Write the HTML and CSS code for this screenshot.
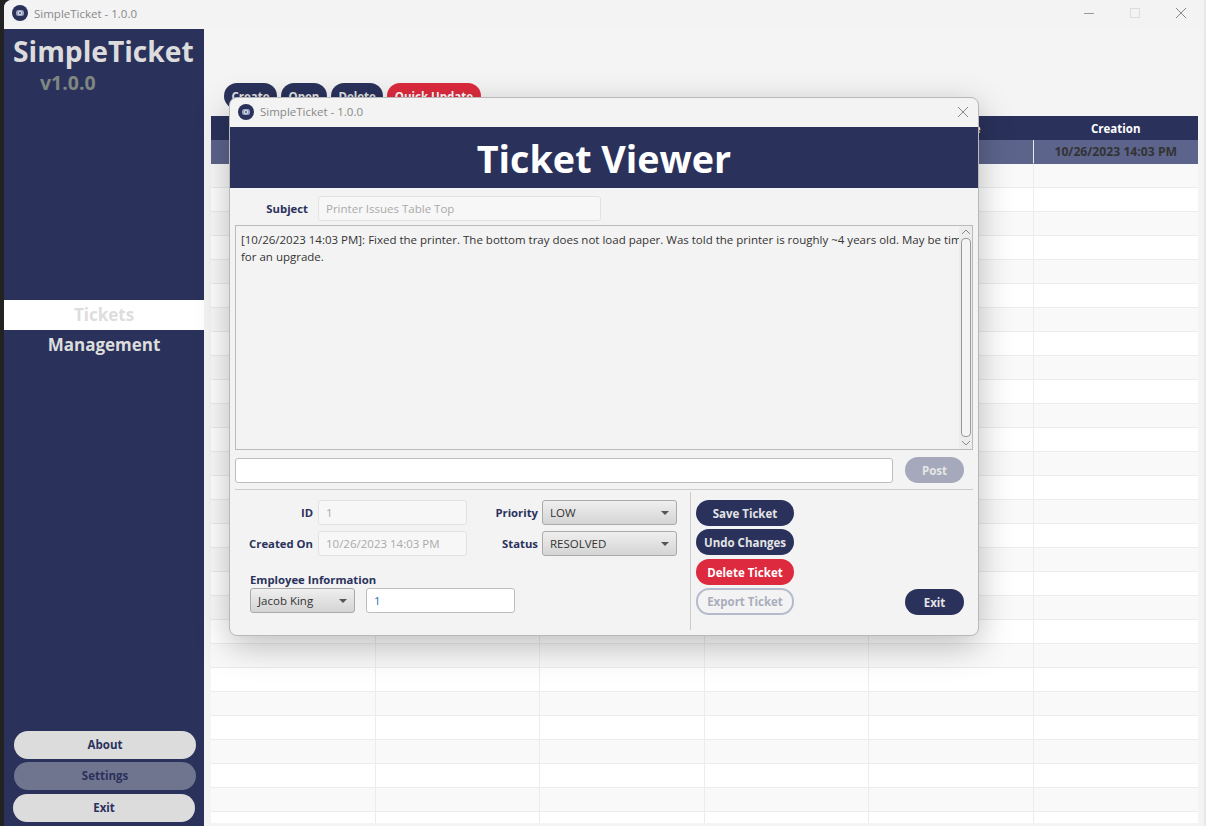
FILE: index.html
```html
<!DOCTYPE html>
<html lang="en">
<head>
    <meta charset="UTF-8">
    <meta name="viewport" content="width=device-width, initial-scale=1.0">
    <title>SimpleTicket - 1.0.0</title>
    <link rel="stylesheet" href="styles.css">
</head>
<body>
    <div class="desktop-edge"></div>

    <div class="app">
        <header class="titlebar">
            <svg class="app-icon" viewBox="0 0 16 16"><circle cx="8" cy="8" r="8" fill="#2a325c"/><rect x="4" y="5" width="8" height="6" rx="2.5" fill="#9aa2c0"/><circle cx="8" cy="8" r="2" fill="#dfe3ee"/><circle cx="8" cy="8" r="1.1" fill="#4a5484"/></svg>
            <span class="titlebar-text">SimpleTicket - 1.0.0</span>
            <div class="window-controls">
                <svg viewBox="0 0 12 12"><path d="M1 6.5H11" stroke="#999" fill="none"/></svg>
                <svg viewBox="0 0 12 12"><rect x="1.5" y="1.5" width="9" height="9" stroke="#ddd" fill="none"/></svg>
                <svg viewBox="0 0 12 12"><path d="M1 1L11 11M11 1L1 11" stroke="#888" fill="none"/></svg>
            </div>
        </header>

        <div class="main">
            <aside class="sidebar">
                <div class="brand">SimpleTicket</div>
                <div class="version">v1.0.0</div>

                <nav class="nav">
                    <div class="nav-item active">Tickets</div>
                    <div class="nav-item">Management</div>
                </nav>

                <div class="side-buttons">
                    <button class="side-btn">About</button>
                    <button class="side-btn dim">Settings</button>
                    <button class="side-btn last">Exit</button>
                </div>
            </aside>

            <section class="content">
                <div class="toolbar">
                    <button class="pill">Create</button>
                    <button class="pill">Open</button>
                    <button class="pill">Delete</button>
                    <button class="pill red">Quick Update</button>
                </div>

                <div class="table-wrap">
                    <table class="tickets">
                        <thead>
                            <tr><th></th><th></th><th></th><th></th><th class="employee-col">Employee</th><th>Creation</th></tr>
                        </thead>
                        <tbody>
                            <tr class="selected"><td></td><td></td><td></td><td></td><td></td><td>10/26/2023 14:03 PM</td></tr>
                            <tr><td></td><td></td><td></td><td></td><td></td><td></td></tr>
                            <tr><td></td><td></td><td></td><td></td><td></td><td></td></tr>
                            <tr><td></td><td></td><td></td><td></td><td></td><td></td></tr>
                            <tr><td></td><td></td><td></td><td></td><td></td><td></td></tr>
                            <tr><td></td><td></td><td></td><td></td><td></td><td></td></tr>
                            <tr><td></td><td></td><td></td><td></td><td></td><td></td></tr>
                            <tr><td></td><td></td><td></td><td></td><td></td><td></td></tr>
                            <tr><td></td><td></td><td></td><td></td><td></td><td></td></tr>
                            <tr><td></td><td></td><td></td><td></td><td></td><td></td></tr>
                            <tr><td></td><td></td><td></td><td></td><td></td><td></td></tr>
                            <tr><td></td><td></td><td></td><td></td><td></td><td></td></tr>
                            <tr><td></td><td></td><td></td><td></td><td></td><td></td></tr>
                            <tr><td></td><td></td><td></td><td></td><td></td><td></td></tr>
                            <tr><td></td><td></td><td></td><td></td><td></td><td></td></tr>
                            <tr><td></td><td></td><td></td><td></td><td></td><td></td></tr>
                            <tr><td></td><td></td><td></td><td></td><td></td><td></td></tr>
                            <tr><td></td><td></td><td></td><td></td><td></td><td></td></tr>
                            <tr><td></td><td></td><td></td><td></td><td></td><td></td></tr>
                            <tr><td></td><td></td><td></td><td></td><td></td><td></td></tr>
                            <tr><td></td><td></td><td></td><td></td><td></td><td></td></tr>
                            <tr><td></td><td></td><td></td><td></td><td></td><td></td></tr>
                            <tr><td></td><td></td><td></td><td></td><td></td><td></td></tr>
                            <tr><td></td><td></td><td></td><td></td><td></td><td></td></tr>
                            <tr><td></td><td></td><td></td><td></td><td></td><td></td></tr>
                            <tr><td></td><td></td><td></td><td></td><td></td><td></td></tr>
                            <tr><td></td><td></td><td></td><td></td><td></td><td></td></tr>
                            <tr><td></td><td></td><td></td><td></td><td></td><td></td></tr>
                            <tr><td></td><td></td><td></td><td></td><td></td><td></td></tr>
                        </tbody>
                    </table>
                </div>
            </section>
        </div>
    </div>

    <div class="desktop-edge right"></div>

    <!-- ticket viewer window, sits over the main app -->
    <div class="dialog">
        <header class="dialog-title">
            <svg class="app-icon" viewBox="0 0 16 16"><circle cx="8" cy="8" r="8" fill="#2a325c"/><rect x="4" y="5" width="8" height="6" rx="2.5" fill="#9aa2c0"/><circle cx="8" cy="8" r="2" fill="#dfe3ee"/><circle cx="8" cy="8" r="1.1" fill="#4a5484"/></svg>
            <span class="titlebar-text">SimpleTicket - 1.0.0</span>
            <svg class="dialog-close" viewBox="0 0 12 12"><path d="M1 1L11 11M11 1L1 11" stroke="#888" fill="none"/></svg>
        </header>

        <div class="banner">Ticket Viewer</div>

        <div class="subject-row">
            <label class="field-label subject-label">Subject</label>
            <input class="field disabled subject-input" type="text" value="Printer Issues Table Top" disabled>
        </div>

        <div class="log">
            <div class="log-text">[10/26/2023 14:03 PM]: Fixed the printer. The bottom tray does not load paper. Was told the printer is roughly ~4 years old. May be time<br>for an upgrade.</div>
            <div class="scrollbar">
                <svg viewBox="0 0 10 6"><path d="M1 5L5 1L9 5" stroke="#888" fill="none"/></svg>
                <div class="thumb"></div>
                <svg viewBox="0 0 10 6"><path d="M1 1L5 5L9 1" stroke="#888" fill="none"/></svg>
            </div>
        </div>

        <div class="post-row">
            <input class="field post-input" type="text">
            <button class="pill action faded">Post</button>
        </div>

        <div class="lower">
            <div class="lower-left">
                <div class="form-grid">
                    <label class="field-label">ID</label>
                    <input class="field disabled" type="text" value="1" disabled>
                    <label class="field-label">Priority</label>
                    <div class="combo">LOW</div>

                    <label class="field-label">Created On</label>
                    <input class="field disabled" type="text" value="10/26/2023 14:03 PM" disabled>
                    <label class="field-label">Status</label>
                    <div class="combo">RESOLVED</div>
                </div>

                <div class="employee">
                    <div class="field-label employee-label">Employee Information</div>
                    <div class="employee-row">
                        <div class="combo employee-combo">Jacob King</div>
                        <input class="field employee-input" type="text" value="1">
                    </div>
                </div>
            </div>

            <div class="lower-right">
                <div class="action-stack">
                    <button class="pill action wide">Save Ticket</button>
                    <button class="pill action wide">Undo Changes</button>
                    <button class="pill action wide red">Delete Ticket</button>
                    <button class="pill action wide outline">Export Ticket</button>
                </div>
                <button class="pill action exit-btn">Exit</button>
            </div>
        </div>
    </div>
</body>
</html>
```

FILE: styles.css
```css
* {
    box-sizing: border-box;
}

html, body {
    height: 100%;
}

body {
    margin: 0;
    display: flex;
    height: 826px;
    overflow: hidden;
    font-family: 'Open Sans', 'Noto Sans', sans-serif;
    font-size: 11.5px;
    color: #333;
    background-color: #222;
}

button {
    font-family: inherit;
    cursor: pointer;
    border: none;
}

.desktop-edge {
    width: 4px;
    background-color: #222;
}

.desktop-edge.right {
    width: 2px;
    background-color: #e8e8e8;
}

.app {
    flex: 1;
    display: flex;
    flex-direction: column;
    background-color: #f4f4f4;
    border-radius: 8px 0 0 0;
    overflow: hidden;
}

.titlebar {
    height: 29px;
    flex: none;
    display: flex;
    align-items: center;
    padding: 0 0 3px 8px;
    background-color: #f3f3f3;
}

.app-icon {
    width: 16px;
    height: 16px;
    flex: none;
}

.titlebar-text {
    margin-left: 6px;
    color: #888;
    font-size: 11.5px;
}

.window-controls {
    margin-left: auto;
    display: flex;
    gap: 34px;
    padding-right: 17px;
}

.window-controls svg {
    width: 12px;
    height: 12px;
}

.main {
    flex: 1;
    display: flex;
    min-height: 0;
}

/* sidebar */
.sidebar {
    width: 200px;
    flex: none;
    display: flex;
    flex-direction: column;
    background-color: #2a325c;
}

.brand {
    margin: 2px 0 0 9px;
    font-size: 28.2px;
    line-height: 40px;
    font-weight: 700;
    color: #dcdcdc;
    white-space: nowrap;
}

.version {
    margin: 1px 0 0 36px;
    font-size: 19.5px;
    line-height: 22px;
    font-weight: 700;
    color: #7f8780;
}

.nav {
    margin-top: 206px;
}

.nav-item {
    height: 30px;
    line-height: 30px;
    text-align: center;
    font-size: 17px;
    font-weight: 700;
    color: #dddddd;
}

.nav-item.active {
    background-color: #fff;
}

.side-buttons {
    margin-top: auto;
    padding: 0 8px 4px 10px;
    display: flex;
    flex-direction: column;
    gap: 3px;
}

.side-btn {
    height: 28px;
    padding: 0 0 2px;
    border-radius: 14px;
    background-color: #dcdcdc;
    color: #2a325c;
    font-size: 11.5px;
    font-weight: 700;
}

.side-btn.dim {
    background-color: #6f748f;
}

.side-btn.last {
    margin: 1px 1px 0 -1px;
}

/* tickets */
.content {
    flex: 1;
    min-width: 0;
    display: flex;
    flex-direction: column;
    padding: 54px 6px 3px 7px;
}

.toolbar {
    display: flex;
    gap: 4px;
    padding-left: 13px;
    margin-bottom: 7px;
}

.pill {
    height: 26px;
    padding: 0 7.5px;
    border-radius: 13px;
    background-color: #2a325c;
    color: #e4e4e4;
    font-size: 11.5px;
    font-weight: 700;
    white-space: nowrap;
}

.pill.red {
    background-color: #dd2a3e;
    color: #fff;
}

.table-wrap {
    flex: 1;
    min-height: 0;
    overflow: hidden;
}

.tickets {
    width: 100%;
    border-collapse: separate;
    border-spacing: 0;
    table-layout: fixed;
}

.tickets th {
    height: 24px;
    padding: 0;
    background-color: #2a325c;
    color: #fff;
    font-size: 11.5px;
    font-weight: 700;
}

.tickets th.employee-col {
    padding-left: 3px;
}

.tickets td {
    height: 24px;
    padding: 0;
    text-align: center;
    border-right: 1px solid #ececec;
    border-bottom: 1px solid #ececec;
    background-color: #fff;
}

.tickets td:last-child {
    border-right: none;
}

.tickets tbody tr:nth-child(even) td {
    background-color: #f9f9f9;
}

.tickets tbody tr.selected td {
    background-color: #5c648c;
    border-bottom-color: #5c648c;
    border-right-color: #e8e8e8;
    color: #333;
    font-size: 12.2px;
    font-weight: 700;
}

/* ticket viewer window */
.dialog {
    position: absolute;
    left: 229px;
    top: 97px;
    width: 750px;
    height: 539px;
    display: flex;
    flex-direction: column;
    background-color: #f3f3f3;
    border: 1px solid #b8b8b8;
    border-radius: 8px;
    overflow: hidden;
    box-shadow: 0 10px 34px rgba(0, 0, 0, 0.26);
}

.dialog-title {
    height: 29px;
    flex: none;
    display: flex;
    align-items: center;
    padding: 0 0 2px 8px;
}

.dialog-close {
    margin-left: auto;
    margin-right: 9px;
    width: 12px;
    height: 12px;
}

.banner {
    height: 61px;
    flex: none;
    text-align: center;
    line-height: 63px;
    background-color: #2a325c;
    color: #fff;
    font-size: 37.7px;
    font-weight: 700;
}

.field-label {
    font-size: 11.3px;
    font-weight: 700;
    color: #2a325c;
    text-align: right;
    white-space: nowrap;
}

.field {
    height: 25px;
    padding: 0 7px;
    border: 1px solid #bdbdbd;
    border-radius: 3px;
    background-color: #fff;
    font-family: inherit;
    font-size: 11.5px;
    color: #333;
    min-width: 0;
    width: 100%;
}

.field.disabled {
    background-color: #f7f7f7;
    border-color: #e2e2e2;
    color: #aaa;
}

.subject-row {
    display: flex;
    align-items: flex-start;
    gap: 10px;
    padding-top: 8px;
    height: 37px;
    flex: none;
}

.subject-label {
    width: 78px;
    line-height: 25px;
}

.subject-input {
    width: 283px;
}

.log {
    height: 225px;
    flex: none;
    margin: 0 5px;
    display: flex;
    border: 1px solid #bbb;
}

.log-text {
    flex: 1;
    min-width: 0;
    overflow: hidden;
    padding: 5px 0 0 5px;
    line-height: 17px;
    white-space: nowrap;
}

.scrollbar {
    width: 13px;
    flex: none;
    display: flex;
    flex-direction: column;
    align-items: center;
    padding: 3px 0;
    gap: 3px;
    background-color: #ececec;
}

.scrollbar svg {
    width: 10px;
    height: 6px;
    flex: none;
}

.thumb {
    flex: 1;
    width: 10px;
    border: 1px solid #999;
    border-radius: 4px;
    background-color: #f4f4f4;
}

.post-row {
    display: flex;
    align-items: center;
    margin: 7px 14px 0 5px;
}

.post-input {
    flex: 1;
}

.post-row .pill {
    margin-left: 12px;
}

.pill.action {
    width: 59px;
    padding: 0;
}

.pill.wide {
    width: 98px;
}

.pill.faded {
    background-color: #a5a9bb;
    color: #e6e6e6;
}

.pill.outline {
    background-color: transparent;
    border: 2px solid #b5bacd;
    color: #a9adbd;
}

.lower {
    flex: 1;
    min-height: 0;
    display: flex;
    margin: 6px 5px 0;
    padding-top: 2px;
    border-top: 1px solid #ccc;
}

.lower-left {
    width: 455px;
    flex: none;
    padding-top: 8px;
}

.form-grid {
    display: grid;
    grid-template-columns: 78px 149px 65px 135px;
    column-gap: 5px;
    row-gap: 6px;
    align-items: center;
}

.form-grid .field-label:nth-child(3),
.form-grid .field-label:nth-child(7) {
    margin-right: -1px;
}

.combo {
    position: relative;
    height: 25px;
    line-height: 23px;
    padding-left: 7px;
    border: 1px solid #aaa;
    border-radius: 3px;
    background: linear-gradient(#efefef, #d4d4d4);
    font-size: 11.5px;
    color: #333;
}

/* dropdown arrow */
.combo::after {
    content: "";
    position: absolute;
    right: 7px;
    top: 10px;
    border-left: 4px solid transparent;
    border-right: 4px solid transparent;
    border-top: 4px solid #555;
}

.employee {
    margin: 15px 0 0 15px;
}

.employee-label {
    text-align: left;
    line-height: 17px;
}

.employee-row {
    display: flex;
    gap: 11px;
}

.employee-combo {
    width: 105px;
}

.employee-input {
    width: 149px;
    color: #2a6cb0;
}

.lower-right {
    flex: 1;
    display: flex;
    justify-content: space-between;
    align-items: flex-end;
    margin-bottom: 5px;
    padding: 8px 9px 15px 5px;
    border-left: 1px solid #ccc;
}

.action-stack {
    display: flex;
    flex-direction: column;
    gap: 3px;
}

.action-stack .red {
    margin-top: 1px;
}

.action-stack .pill:last-child {
    height: 27px;
}
```
